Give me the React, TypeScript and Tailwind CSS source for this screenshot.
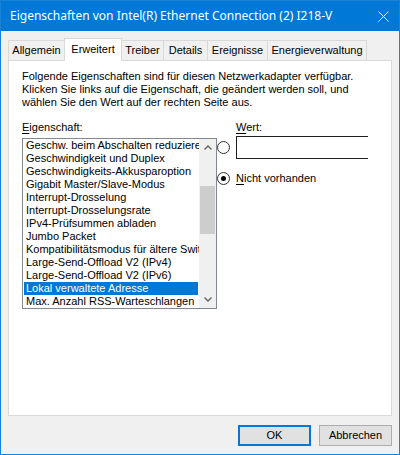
import React from "react";

const font = { fontFamily: '"Liberation Sans", Arial, sans-serif' };

const tabs = [
  { label: "Allgemein", w: "w-[57px]" },
  { label: "Erweitert", w: "w-[58px]", active: true },
  { label: "Treiber", w: "w-[43px]" },
  { label: "Details", w: "w-[45px]" },
  { label: "Ereignisse", w: "w-[61px]" },
  { label: "Energieverwaltung", w: "w-[100px]" },
];

const properties = [
  "Geschw. beim Abschalten reduzieren",
  "Geschwindigkeit und Duplex",
  "Geschwindigkeits-Akkusparoption",
  "Gigabit Master/Slave-Modus",
  "Interrupt-Drosselung",
  "Interrupt-Drosselungsrate",
  "IPv4-Prüfsummen abladen",
  "Jumbo Packet",
  "Kompatibilitätsmodus für ältere Switches",
  "Large-Send-Offload V2 (IPv4)",
  "Large-Send-Offload V2 (IPv6)",
  "Lokal verwaltete Adresse",
  "Max. Anzahl RSS-Warteschlangen",
];

function Radio({ checked }: { checked?: boolean }) {
  return (
    <div className="flex h-[13px] w-[13px] shrink-0 items-center justify-center rounded-full border border-[#333333] bg-white">
      {checked && <div className="h-[5px] w-[5px] rounded-full bg-black" />}
    </div>
  );
}

function Chevron({ down }: { down?: boolean }) {
  return (
    <svg width="8" height="5" viewBox="0 0 8 5">
      <path
        d={down ? "M0.5 0.5 L4 4 L7.5 0.5" : "M0.5 4.5 L4 1 L7.5 4.5"}
        fill="none"
        stroke="#606060"
        strokeWidth="1.3"
      />
    </svg>
  );
}

export default function App() {
  return (
    <div
      className="flex h-[455px] w-[400px] flex-col border border-[#1883d7] bg-[#f0f0f0] text-black"
      style={font}
    >
      {/* title bar */}
      <div className="flex h-[30px] shrink-0 items-center justify-between bg-[#0078d7] pl-[9px] pr-[10px]">
        <span
          className="text-[12px] text-white"
          style={{ fontFamily: '"Noto Sans", "Open Sans", sans-serif' }}
        >
          Eigenschaften von Intel(R) Ethernet Connection (2) I218-V
        </span>
        <svg width="11" height="11" viewBox="0 0 11 11">
          <path d="M0.5 0.5 L10.5 10.5 M10.5 0.5 L0.5 10.5" stroke="white" strokeWidth="1" />
        </svg>
      </div>

      {/* tab strip */}
      <div className="mt-[7px] flex h-[22px] items-end pl-[7px] text-[11px]">
        {tabs.map((t, i) =>
          t.active ? (
            <div
              key={t.label}
              className={`relative z-10 -mb-px -ml-px flex h-[23px] ${t.w} items-start justify-center border border-b-0 border-[#d9d9d9] bg-white pt-[2px]`}
            >
              {t.label}
            </div>
          ) : (
            <div
              key={t.label}
              className={`flex h-[20px] ${t.w} ${i > 0 ? "-ml-px" : ""} items-center justify-center border border-b-0 border-[#d9d9d9] bg-[#f0f0f0]`}
            >
              {t.label}
            </div>
          )
        )}
      </div>

      {/* tab page */}
      <div className="mx-[7px] h-[356px] shrink-0 overflow-hidden border border-[#d9d9d9] bg-white pl-[13px] pt-[9px] text-[11px] leading-[13px]">
        <p>
          Folgende Eigenschaften sind für diesen Netzwerkadapter verfügbar.
          <br />
          Klicken Sie links auf die Eigenschaft, die geändert werden soll, und
          <br />
          wählen Sie den Wert auf der rechten Seite aus.
        </p>

        <div className="mt-[12px] flex items-start">
          <div className="flex w-[195px] shrink-0 flex-col">
            <div>
              <span className="underline underline-offset-2">E</span>igenschaft:
            </div>
            <div className="mt-[4px] flex h-[171px] border border-[#828790] bg-white">
              <div className="w-[176px] overflow-hidden">
                {properties.map((p) =>
                  p === "Lokal verwaltete Adresse" ? (
                    <div
                      key={p}
                      className="mx-px h-[13px] whitespace-nowrap bg-[#0078d7] pl-[2px] text-white"
                    >
                      {p}
                    </div>
                  ) : (
                    <div key={p} className="h-[13px] whitespace-nowrap pl-[3px]">
                      {p}
                    </div>
                  )
                )}
              </div>
              <div className="flex w-[17px] flex-col bg-[#f0f0f0]">
                <div className="flex h-[17px] items-center justify-center">
                  <Chevron />
                </div>
                <div className="mx-px mt-[30px] h-[48px] bg-[#cdcdcd]" />
                <div className="flex-1" />
                <div className="flex h-[17px] items-center justify-center">
                  <Chevron down />
                </div>
              </div>
            </div>
          </div>

          <div className="flex flex-col">
            <div className="pl-[19px]">
              <span className="underline underline-offset-2">W</span>ert:
            </div>
            <div className="mt-[2px] flex items-center gap-[6px]">
              <Radio />
              <div className="h-[23px] w-[132px] border border-r-0 border-[#1f1f1f]" />
            </div>
            <div className="mt-[13px] flex items-center gap-[6px]">
              <Radio checked />
              <span>
                <span className="underline underline-offset-2">N</span>icht vorhanden
              </span>
            </div>
          </div>
        </div>
      </div>

      {/* dialog buttons */}
      <div className="mr-[7px] mt-[9px] flex justify-end gap-[8px] text-[11px]">
        <button className="h-[21px] w-[73px] border-2 border-[#0078d7] bg-[#e1e1e1]">OK</button>
        <button className="h-[21px] w-[73px] border border-[#adadad] bg-[#e1e1e1]">
          Abbrechen
        </button>
      </div>
    </div>
  );
}
